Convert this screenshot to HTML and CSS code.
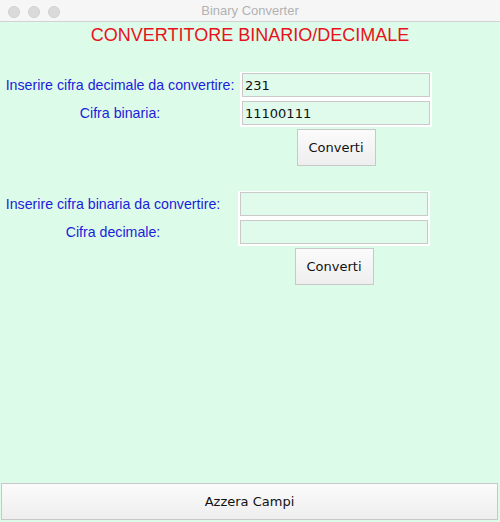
FILE: index.html
```html
<!DOCTYPE html>
<html lang="it">
<head>
<meta charset="utf-8">
<title>Binary Converter</title>
<link rel="stylesheet" href="styles.css">
</head>
<body>
<div class="window">
  <div class="titlebar">
    <div class="lights">
      <span class="light"></span><span class="light"></span><span class="light"></span>
    </div>
    <div class="title">Binary Converter</div>
  </div>
  <div class="content">
    <h1 class="heading">CONVERTITORE BINARIO/DECIMALE</h1>

    <div class="section section-one">
      <div class="labels">
        <label class="label">Inserire cifra decimale da convertire:</label>
        <label class="label">Cifra binaria:</label>
      </div>
      <div class="fields">
        <input class="field" type="text" value="231">
        <input class="field" type="text" value="11100111">
      </div>
      <button class="btn convert">Converti</button>
    </div>

    <div class="section section-two">
      <div class="labels">
        <label class="label">Inserire cifra binaria da convertire:</label>
        <label class="label">Cifra decimale:</label>
      </div>
      <div class="fields">
        <input class="field" type="text" value="">
        <input class="field" type="text" value="">
      </div>
      <button class="btn convert">Converti</button>
    </div>

    <div class="spacer"></div>
    <button class="btn reset">Azzera Campi</button>
  </div>
</div>
</body>
</html>
```
FILE: styles.css
```css
* { box-sizing: border-box; }
html, body { margin: 0; padding: 0; }
body {
  width: 500px;
  height: 522px;
  overflow: hidden;
  font-family: "Liberation Sans", Arial, sans-serif;
}
.window {
  display: flex;
  flex-direction: column;
  height: 522px;
}
.titlebar {
  height: 22px;
  background: #f6f6f6;
  border-bottom: 1px solid #d2d2d2;
  display: flex;
  align-items: center;
  position: relative;
  flex: none;
}
.lights {
  display: flex;
  gap: 8px;
  padding-left: 8px;
  margin-top: 2px;
}
.light {
  width: 12px;
  height: 12px;
  border-radius: 50%;
  background: #dadada;
  border: 1px solid #d0d0d0;
}
.title {
  position: absolute;
  left: 0;
  right: 0;
  top: 3px;
  text-align: center;
  font-size: 13px;
  color: #b2b2b2;
  line-height: 16px;
}
.content {
  flex: 1;
  background: #ddfbe9;
  display: flex;
  flex-direction: column;
}
.heading {
  margin: 2px 0 0 0;
  font-size: 18px;
  line-height: 22px;
  font-weight: normal;
  color: #e8121c;
  text-align: center;
}
.section {
  display: grid;
  align-items: start;
}
.section-one {
  margin-top: 26px;
  grid-template-columns: 240px 192px;
}
.section-two {
  margin-top: 25px;
  grid-template-columns: 226px 192px;
  column-gap: 12px;
}
.labels {
  display: flex;
  flex-direction: column;
  gap: 4px;
  padding: 1px 0 2px;
}
.label {
  line-height: 24px;
  height: 24px;
  font-size: 14.2px;
  color: #1c1cdc;
  text-align: center;
  white-space: nowrap;
}
.fields {
  background: #ffffff;
  display: flex;
  flex-direction: column;
  gap: 4px;
  padding: 1px 2px 2px;
}
.field {
  display: block;
  width: 100%;
  height: 24px;
  margin: 0;
  border: 1px solid #c9c9c9;
  background: #e0fbeb;
  padding: 0 2px;
  font-family: "DejaVu Sans", sans-serif;
  font-size: 13px;
  color: #111;
  outline: none;
}
.btn {
  font-family: "DejaVu Sans", sans-serif;
  font-size: 13px;
  color: #111;
  background: linear-gradient(#fbfbfb, #eeeeee);
  border: 1px solid #c8c8c8;
  border-radius: 0;
  padding: 0;
  margin: 0;
}
.convert {
  grid-column: 2;
  justify-self: center;
  width: 79px;
  height: 37px;
  margin-top: 2px;
}
.spacer { flex: 1; }
.reset {
  height: 37px;
  margin: 0 2px 2px 1px;
  flex: none;
}
```
